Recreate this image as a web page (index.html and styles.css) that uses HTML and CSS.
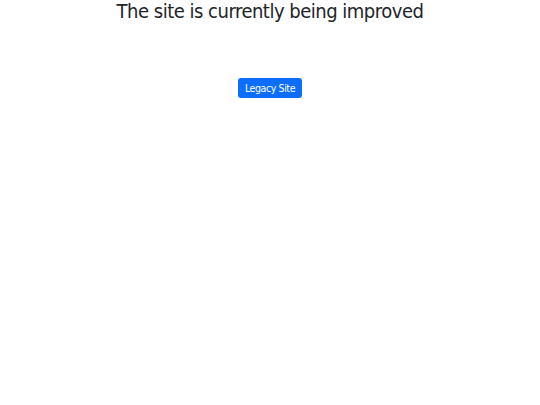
FILE: index.html
```html
<!DOCTYPE html>
<html>
<head>
<meta charset="utf-8">
<link rel="stylesheet" href="styles.css">
</head>
<body>
<div class="page">
  <h1 class="title">The site is currently being improved</h1>
  <a class="btn" href="#">Legacy Site</a>
</div>
</body>
</html>
```
FILE: styles.css
```css
html, body {
  margin: 0;
  padding: 0;
  background: #fff;
}
.page {
  display: flex;
  flex-direction: column;
  align-items: center;
  font-family: "DejaVu Sans Condensed", "DejaVu Sans", sans-serif;
  font-stretch: condensed;
  color: #212529;
}
.title {
  margin: 0;
  font-size: 20px;
  font-weight: normal;
  line-height: 22px;
  letter-spacing: -0.5px;
}
.btn {
  margin-top: 56px;
  display: inline-block;
  background: #0d6efd;
  color: #fff;
  text-decoration: none;
  font-size: 10.5px;
  line-height: 14px;
  letter-spacing: -0.4px;
  padding: 3px 7px;
  border-radius: 3px;
}
```
